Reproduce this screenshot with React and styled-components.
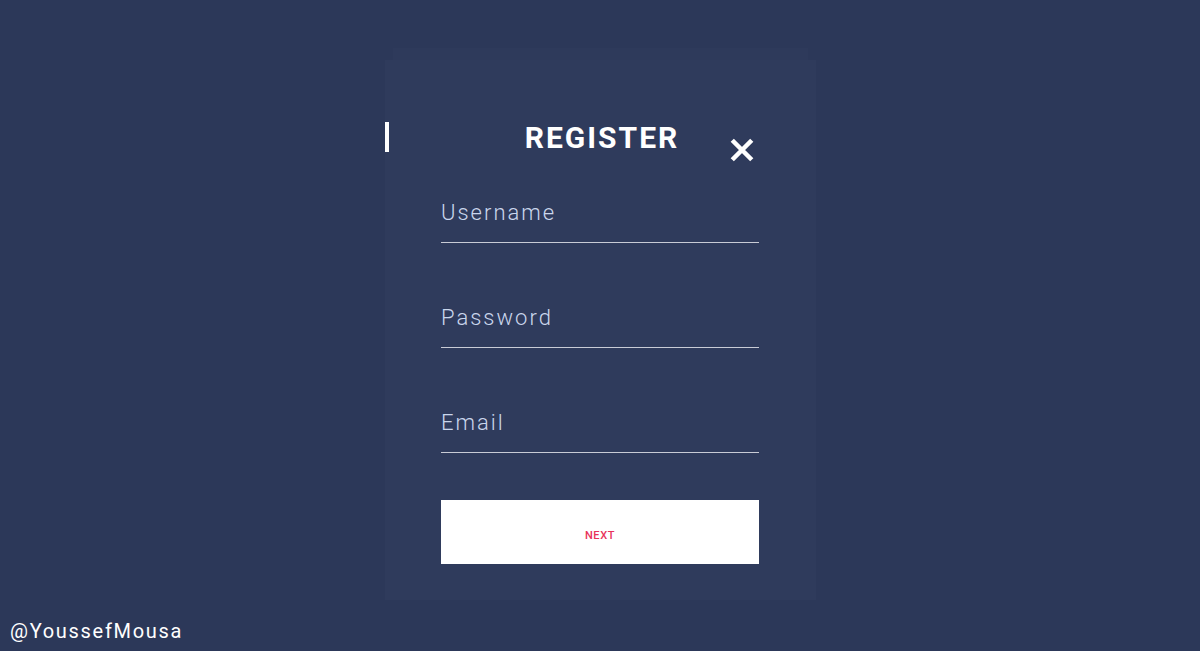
import styled, { createGlobalStyle } from "styled-components";

const GlobalStyle = createGlobalStyle`
  html, body {
    margin: 0;
    padding: 0;
    background: #2c3859;
    font-family: Roboto, "Liberation Sans", sans-serif;
  }
`;

const Page = styled.div`
  height: 651px;
  display: flex;
  flex-direction: column;
  align-items: center;
  padding-top: 48px;
  box-sizing: border-box;
  position: relative;
`;

const BackStrip = styled.div`
  width: 415px;
  height: 12px;
  background: #2e3a5b;
`;

const Card = styled.div`
  width: 431px;
  height: 540px;
  background: #2f3b5c;
  box-sizing: border-box;
  display: flex;
  flex-direction: column;
  align-items: center;
  padding-top: 60px;
  position: relative;
`;

const Caret = styled.span`
  position: absolute;
  left: 0;
  top: 62px;
  width: 4px;
  height: 30px;
  background: #ffffff;
`;

const Header = styled.div`
  width: 318px;
  position: relative;
  display: flex;
  justify-content: center;
  height: 40px;
`;

const Title = styled.h1`
  margin: 0;
  font-size: 30px;
  font-weight: 700;
  letter-spacing: 2px;
  color: #ffffff;
  line-height: 36px;
  padding-left: 4px;
`;

const Close = styled.button`
  position: absolute;
  right: 2px;
  top: 15px;
  width: 30px;
  height: 30px;
  padding: 0;
  border: none;
  background: transparent;
  cursor: pointer;
  display: flex;
  align-items: center;
  justify-content: center;
`;

const Form = styled.form`
  width: 318px;
  display: flex;
  flex-direction: column;
  margin-top: 36px;
`;

const Field = styled.input`
  width: 100%;
  box-sizing: border-box;
  background: transparent;
  border: none;
  border-bottom: 1px solid #c9ccd6;
  outline: none;
  color: #ffffff;
  font-family: Roboto, "Liberation Sans", sans-serif;
  font-size: 22px;
  font-weight: 300;
  letter-spacing: 2px;
  padding: 0 0 14px 0;
  height: 47px;
  margin-bottom: 58px;
  &::placeholder {
    color: #cad6ec;
  }
`;

const Next = styled.button`
  width: 100%;
  height: 64px;
  margin-top: -11px;
  background: #ffffff;
  border: none;
  color: #e8325a;
  font-family: Roboto, "Liberation Sans", sans-serif;
  font-size: 11px;
  font-weight: 500;
  letter-spacing: 0.6px;
  padding-top: 7px;
  cursor: pointer;
`;

const Credit = styled.div`
  position: absolute;
  left: 10px;
  bottom: 8px;
  color: #ffffff;
  font-size: 20px;
  letter-spacing: 1.7px;
`;

export default function App() {
  return (
    <>
      <GlobalStyle />
      <Page>
        <BackStrip />
        <Card>
          <Caret />
          <Header>
            <Title>REGISTER</Title>
            <Close aria-label="close">
              <svg width="26" height="26" viewBox="0 0 24 24">
                <path d="M3 3 L21 21 M21 3 L3 21" stroke="#fff" strokeWidth="4.2" />
              </svg>
            </Close>
          </Header>
          <Form onSubmit={e => e.preventDefault()}>
            <Field placeholder="Username" />
            <Field placeholder="Password" type="password" />
            <Field placeholder="Email" />
            <Next type="submit">NEXT</Next>
          </Form>
        </Card>
        <Credit>@YoussefMousa</Credit>
      </Page>
    </>
  );
}
